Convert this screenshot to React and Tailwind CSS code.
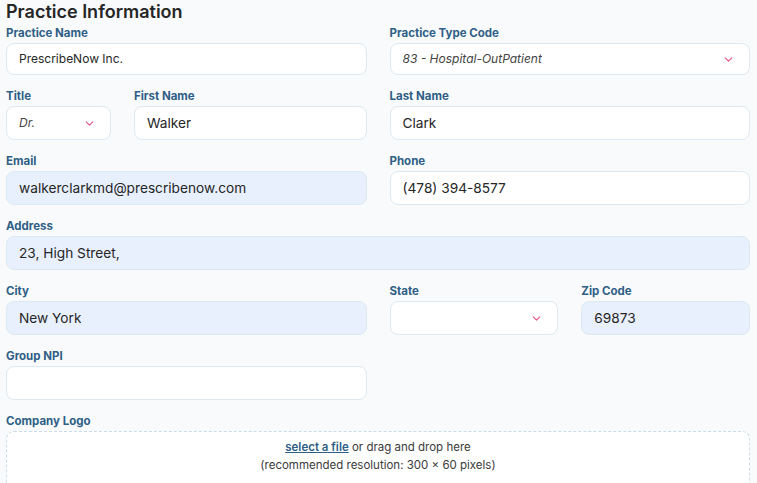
import { ChevronDown } from 'lucide-react';

const font = { fontFamily: 'Inter, "Noto Sans", sans-serif' };

function Label({ children }) {
  return <div className="text-[11.5px] font-bold leading-4 mb-[2px] text-[#2f5f86]">{children}</div>;
}

function Box({ value, filled, small, italic, select, className = '' }) {
  return (
    <div
      className={`h-[34px] rounded-lg border border-[#dde9f1] flex items-center justify-between pl-3 pr-[14px] ${filled ? 'bg-[#e8f0fe]' : 'bg-white'} ${className}`}
    >
      <span
        className={`${small || italic ? 'text-[12px]' : 'text-[13.7px]'} ${italic ? 'italic text-[#444]' : 'text-[#262626]'} truncate`}
      >
        {value}
      </span>
      {select && <ChevronDown size={13} strokeWidth={2} className="text-[#e8508a] shrink-0" />}
    </div>
  );
}

function Field({ label, className = '', boxClass = '', ...rest }) {
  return (
    <div className={className}>
      <Label>{label}</Label>
      <Box className={boxClass} {...rest} />
    </div>
  );
}

export default function App() {
  return (
    <div style={font} className="w-[757px] h-[483px] overflow-hidden bg-[#f8fafb] px-[6px] pr-[7px]">
      <h1 className="text-[18px] font-semibold leading-[22px] text-[#262626] pt-[1px] mb-[2px]">Practice Information</h1>

      <div className="flex flex-col gap-[13px]">
        <div className="grid grid-cols-2 gap-x-[23px]">
          <Field label="Practice Name" value="PrescribeNow Inc." small boxClass="!h-[32px]" />
          <Field label="Practice Type Code" value="83 - Hospital-OutPatient" italic select boxClass="!h-[32px]" />
        </div>

        <div className="grid grid-cols-2 gap-x-[23px]">
          <div className="flex gap-[23px]">
            <Field label="Title" value="Dr." italic select className="w-[105px] shrink-0" />
            <Field label="First Name" value="Walker" className="flex-1" />
          </div>
          <Field label="Last Name" value="Clark" />
        </div>

        <div className="grid grid-cols-2 gap-x-[23px]">
          <Field label="Email" value="walkerclarkmd@prescribenow.com" filled />
          <Field label="Phone" value="(478) 394-8577" />
        </div>

        <Field label="Address" value="23, High Street," filled />

        <div className="grid grid-cols-2 gap-x-[23px]">
          <Field label="City" value="New York" filled />
          <div className="grid grid-cols-2 gap-x-[23px]">
            <Field label="State" value="" select />
            <Field label="Zip Code" value="69873" filled />
          </div>
        </div>

        <div className="grid grid-cols-2 gap-x-[23px]">
          <Field label="Group NPI" value="" />
          <div />
        </div>

        <div>
          <Label>Company Logo</Label>
          <div className="h-[80px] rounded-lg border border-dashed border-[#c9dce7] bg-white flex flex-col items-center pt-[6px] text-[11.5px] leading-[18px] text-[#3a3a3a]">
            <div>
              <span className="underline font-semibold text-[#2f5f86]">select a file</span> or drag and drop here
            </div>
            <div>(recommended resolution: 300 × 60 pixels)</div>
          </div>
        </div>
      </div>
    </div>
  );
}
